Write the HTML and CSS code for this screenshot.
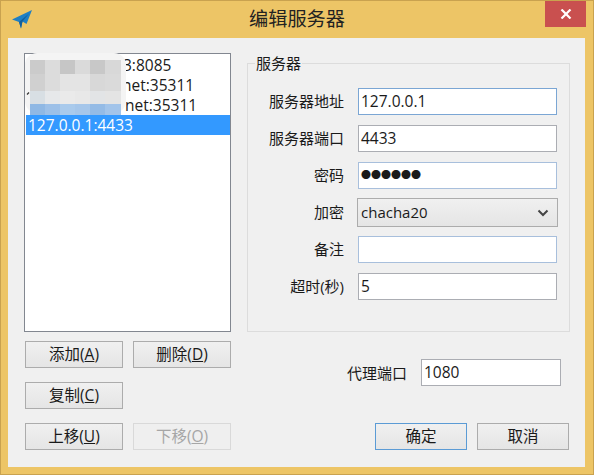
FILE: index.html
```html
<!DOCTYPE html>
<html lang="zh">
<head>
<meta charset="utf-8">
<title>编辑服务器</title>
<link rel="stylesheet" href="styles.css">
</head>
<body>
<div class="window">
  <header class="titlebar">
    <svg class="app-icon" width="20" height="20" viewBox="0 0 20 20"><path d="M0 10.500 20 1 14.500 15 10.500 12.500 9 19.500 7 13Z" fill="#1f7fc4"/><path d="M7 13 17 4.500 10.500 12.500 9 19.500Z" fill="#135f9c"/></svg>
    <h1 class="title">编辑服务器</h1>
    <button class="close" aria-label="关闭"><svg width="12" height="10" viewBox="0 0 12 10"><path d="M1.500 .5 10.500 9.500M10.500 .5 1.500 9.500" stroke="#fff" stroke-width="2.200" fill="none"/></svg></button>
  </header>
  <main class="client">
    <section class="left">
      <div class="list">
        <div class="row row-a">3:8085</div>
        <div class="row row-b">net:35311</div>
        <div class="row row-c">net:35311</div>
        <div class="row selected">127.0.0.1:4433</div>
        <svg class="mosaic" width="101" height="62" viewBox="0 0 101 62" aria-hidden="true">
          <rect x="0" y="0" width="101" height="60" rx="12" fill="#f4f4f4"/>
          <rect x="5" y="7" width="15" height="14" fill="#cbcbcb"/><rect x="20" y="7" width="15" height="14" fill="#dcdcdc"/><rect x="35" y="7" width="15" height="14" fill="#c6c6c6"/><rect x="50" y="7" width="15" height="14" fill="#dadada"/><rect x="65" y="7" width="15" height="14" fill="#c8c8c8"/><rect x="80" y="7" width="16" height="14" fill="#d8d8d8"/>
          <rect x="5" y="21" width="15" height="17" fill="#d0d0d0"/><rect x="20" y="21" width="15" height="17" fill="#dcdcdc"/><rect x="35" y="21" width="15" height="17" fill="#e4e4e4"/><rect x="50" y="21" width="15" height="17" fill="#e4e4e4"/><rect x="65" y="21" width="15" height="17" fill="#d8d8d8"/><rect x="80" y="21" width="16" height="17" fill="#dadada"/>
          <rect x="5" y="38" width="15" height="13" fill="#d8dfe4"/><rect x="20" y="38" width="15" height="13" fill="#e6e8ea"/><rect x="35" y="38" width="15" height="13" fill="#eaeaea"/><rect x="50" y="38" width="15" height="13" fill="#e8e8e8"/><rect x="65" y="38" width="15" height="13" fill="#e2e4e6"/><rect x="80" y="38" width="16" height="13" fill="#e4e4e4"/>
          <rect x="5" y="51" width="15" height="11" fill="#8fb8e4"/><rect x="20" y="51" width="15" height="11" fill="#9cc0e8"/><rect x="35" y="51" width="15" height="11" fill="#a9caec"/><rect x="50" y="51" width="15" height="11" fill="#a5c6ea"/><rect x="65" y="51" width="15" height="11" fill="#94bbe6"/><rect x="80" y="51" width="16" height="11" fill="#a2c4ea"/>
          <path d="M2 41.500 4 39.500" stroke="#333" stroke-width="1.200" fill="none"/>
        </svg>
      </div>
      <div class="btn-grid">
        <button class="btn">添加(<u>A</u>)</button>
        <button class="btn">删除(<u>D</u>)</button>
        <button class="btn">复制(<u>C</u>)</button>
        <span></span>
        <button class="btn">上移(<u>U</u>)</button>
        <button class="btn disabled">下移(<u>O</u>)</button>
      </div>
    </section>
    <section class="right">
      <fieldset class="group">
        <legend>服务器</legend>
        <div class="form">
          <label>服务器地址</label><div class="input focus">127.0.0.1</div>
          <label>服务器端口</label><div class="input">4433</div>
          <label>密码</label><div class="input hint pw">●●●●●●</div>
          <label>加密</label>
          <div class="select">chacha20<svg width="12" height="8" viewBox="0 0 12 8"><path d="M1.500 1.500 6 6 10.500 1.500" stroke="#444" stroke-width="2" fill="none"/></svg></div>
          <label>备注</label><div class="input hint"></div>
          <label>超时(秒)</label><div class="input">5</div>
        </div>
      </fieldset>
      <div class="proxy">
        <label>代理端口</label><div class="input">1080</div>
      </div>
      <div class="actions">
        <button class="btn action default">确定</button>
        <button class="btn action">取消</button>
      </div>
    </section>
  </main>
</div>
</body>
</html>
```
FILE: styles.css
```css
* { box-sizing: border-box; }
html, body { margin: 0; padding: 0; }
body {
  width: 594px;
  height: 475px;
  overflow: hidden;
  font-family: "Open Sans", "Noto Sans CJK SC", sans-serif;
  font-size: 15px;
  color: #1a1a1a;
}
.window {
  width: 594px;
  height: 475px;
  background: #edc566;
  border: 1px solid #c9a24f;
  display: flex;
  flex-direction: column;
}
.titlebar {
  height: 37px;
  flex: none;
  position: relative;
  display: flex;
  align-items: flex-start;
  justify-content: center;
}
.app-icon { position: absolute; left: 11px; top: 8px; }
.title {
  margin: 6px 0 0;
  font-size: 19.200px;
  font-weight: 400;
  line-height: 24px;
  color: #222;
}
.close {
  position: absolute;
  right: 7px;
  top: 0;
  width: 41px;
  height: 26px;
  padding: 0;
  border: 0;
  background: #c9504f;
  display: flex;
  align-items: center;
  justify-content: center;
}
.client {
  flex: 1;
  margin: 0 8px 7px 7px;
  background: #f0f0f0;
  padding: 15px 15px 0 16px;
  display: flex;
  gap: 16px;
}
.left { width: 207px; flex: none; }
.list {
  position: relative;
  height: 279px;
  background: #fff;
  border: 1px solid #828790;
  padding: 1px 0 1px 1px;
  font-size: 15.500px;
}
.row {
  height: 20px;
  line-height: 20px;
  padding-left: 2px;
  white-space: nowrap;
}
.row-a { padding-left: 97px; }
.row-b { padding-left: 96px; }
.row-c { padding-left: 99px; }
.selected { background: #3399ff; color: #fff; }
.mosaic { position: absolute; left: 0; top: -1px; }
.btn-grid {
  margin: 9px 0 0 1px;
  display: grid;
  grid-template-columns: 98px 98px;
  grid-auto-rows: 27px;
  column-gap: 10px;
  row-gap: 14px;
}
.btn {
  padding: 0;
  border: 1px solid #acacac;
  background: linear-gradient(#f0f0f0, #e5e5e5);
  font: inherit;
  font-size: 15.500px;
  line-height: 1;
  color: #1a1a1a;
}
.btn.disabled { color: #a6a6a6; border-color: #d9d9d9; background: #efefef; }
.right { width: 323px; flex: none; }
.group {
  margin: 2px 0 0;
  height: 277px;
  padding: 0;
  border: 1px solid #dcdcdc;
}
.group legend {
  margin-left: 7px;
  padding: 0 1px;
  line-height: 16px;
  font-size: 15px;
}
.form {
  margin-top: 17px;
  display: grid;
  grid-template-columns: 96px 199px;
  grid-auto-rows: 27px;
  column-gap: 14px;
  row-gap: 10px;
  align-items: center;
}
.form label { text-align: right; line-height: 27px; }
.input {
  height: 27px;
  line-height: 25px;
  background: #fff;
  border: 1px solid #abadb3;
  padding-left: 2px;
  font-size: 15.500px;
}
.input.focus { border-color: #7ba6d4; }
.input.hint { border-color: #a8bfdc; }
.pw { font-size: 10px; padding-left: 2px; }
.select {
  height: 29px;
  margin: 0 -1px;
  line-height: 27px;
  padding: 0 8px 0 3px;
  border: 1px solid #acacac;
  background: linear-gradient(#f0f0f0, #e5e5e5);
  display: flex;
  align-items: center;
  justify-content: space-between;
}
.proxy {
  margin: 27px 9px 0 100px;
  display: flex;
  justify-content: space-between;
  align-items: center;
}
.proxy .input { width: 140px; }
.actions {
  margin-top: 37px;
  padding-left: 128px;
  display: flex;
  gap: 10px;
}
.action { width: 92px; height: 27px; }
.action.default { border-color: #5b9bd5; }
```
